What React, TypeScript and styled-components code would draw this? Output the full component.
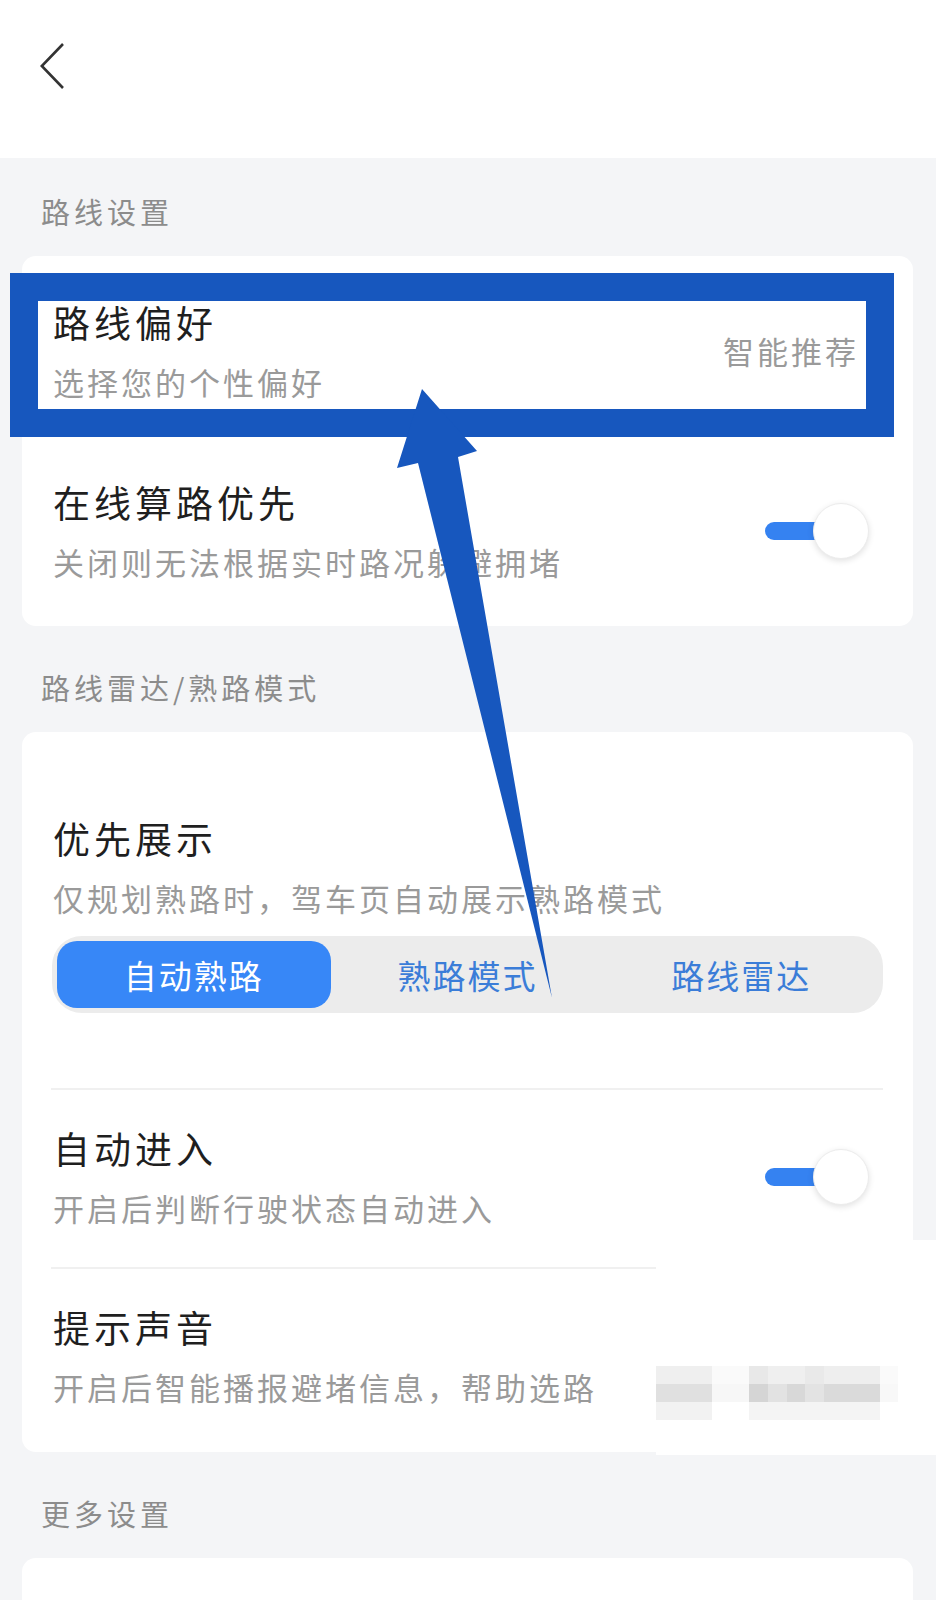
import React from "react";
import styled, { createGlobalStyle } from "styled-components";

const GlobalStyle = createGlobalStyle`
  body {
    margin: 0;
    background: #f4f5f7;
    font-family: "Noto Sans CJK SC", "Noto Sans", sans-serif;
  }
`;

const Page = styled.div`
  position: relative;
  width: 936px;
  height: 1600px;
  background: #f4f5f7;
  overflow: hidden;
`;

const Header = styled.header`
  height: 158px;
  box-sizing: border-box;
  padding: 43px 0 0 40px;
  background: #fff;
`;

const BackButton = styled.button`
  display: block;
  padding: 0;
  border: none;
  background: none;
  cursor: pointer;
`;

const SectionTitle = styled.div<{ $first?: boolean }>`
  padding: ${({ $first }) => ($first ? "35px" : "43px")} 0 27px 41px;
  font-size: 29px;
  line-height: 36px;
  letter-spacing: 4px;
  color: #8c8c8c;
`;

const Card = styled.div<{ $pad?: string; $tail?: boolean }>`
  margin: 0 23px 0 22px;
  padding: ${({ $pad }) => $pad ?? "0"};
  background: #fff;
  border-radius: 14px;
  min-height: ${({ $tail }) => ($tail ? "60px" : "0")};
`;

const Row = styled.div<{ $top: number; $bottom: number }>`
  display: flex;
  align-items: center;
  justify-content: space-between;
  padding: ${({ $top, $bottom }) => `${$top}px 44px ${$bottom}px 31px`};
`;

const Texts = styled.div`
  display: flex;
  flex-direction: column;
  gap: 19px;
`;

const Title = styled.div`
  font-size: 37px;
  line-height: 44px;
  letter-spacing: 4px;
  color: #1f1f1f;
`;

const Sub = styled.div`
  font-size: 31px;
  line-height: 38px;
  letter-spacing: 3px;
  color: #9a9a9a;
  white-space: nowrap;
`;

const Value = styled.div`
  margin-right: 10px;
  font-size: 31px;
  line-height: 38px;
  letter-spacing: 3px;
  color: #9a9a9a;
`;

const Toggle = styled.div`
  position: relative;
  width: 104px;
  height: 56px;
  flex-shrink: 0;
`;

const Track = styled.div`
  position: absolute;
  left: 0;
  top: 19px;
  width: 84px;
  height: 18px;
  border-radius: 9px;
  background: #3582f1;
`;

const Knob = styled.div`
  position: absolute;
  right: 0;
  top: 0;
  width: 56px;
  height: 56px;
  box-sizing: border-box;
  border-radius: 50%;
  background: #fff;
  border: 1px solid #ececec;
  box-shadow: 0 2px 6px rgba(0, 0, 0, 0.12);
`;

const Block = styled.div`
  padding: 84px 30px 75px 31px;
`;

const Segmented = styled.div`
  display: grid;
  grid-template-columns: repeat(3, 1fr);
  margin: 19px 0 0 -1px;
  padding: 5px;
  height: 77px;
  box-sizing: border-box;
  border-radius: 30px;
  background: #ececec;
`;

const Segment = styled.div<{ $active?: boolean }>`
  display: flex;
  align-items: center;
  justify-content: center;
  border-radius: 20px;
  font-size: 33px;
  letter-spacing: 2px;
  background: ${({ $active }) => ($active ? "#3787f7" : "transparent")};
  color: ${({ $active }) => ($active ? "#fff" : "#3b7dd8")};
`;

const Divider = styled.div`
  height: 2px;
  margin: 0 30px 0 29px;
  background: #f0f0f0;
`;

const Highlight = styled.div`
  position: absolute;
  left: 10px;
  top: 273px;
  width: 884px;
  height: 164px;
  box-sizing: border-box;
  border: 28px solid #1757be;
  pointer-events: none;
`;

const Overlay = styled.svg`
  position: absolute;
  left: 0;
  top: 0;
  pointer-events: none;
`;

const Mask = styled.div`
  position: absolute;
  left: 656px;
  top: 1240px;
  width: 280px;
  height: 215px;
  background: #fff;
`;

function Switch() {
  return (
    <Toggle>
      <Track />
      <Knob />
    </Toggle>
  );
}

const blocks: [number, number, number, number, string][] = [
  [0, 126, 56, 18, "#efefef"],
  [56, 126, 37, 18, "#fafafa"],
  [93, 126, 19, 18, "#e8e8e8"],
  [112, 126, 37, 18, "#efefef"],
  [149, 126, 19, 18, "#e9e9e9"],
  [168, 126, 56, 18, "#eeeeee"],
  [224, 126, 18, 18, "#fafafa"],
  [0, 144, 56, 18, "#e0e0e0"],
  [56, 144, 37, 18, "#f7f7f7"],
  [93, 144, 19, 18, "#d5d5d5"],
  [112, 144, 19, 18, "#e2e2e2"],
  [131, 144, 18, 18, "#d8d8d8"],
  [149, 144, 19, 18, "#e3e3e3"],
  [168, 144, 56, 18, "#dadada"],
  [224, 144, 18, 18, "#f8f8f8"],
  [0, 162, 56, 18, "#f2f2f2"],
  [93, 162, 131, 18, "#f4f4f4"],
];

export default function App() {
  return (
    <Page>
      <GlobalStyle />
      <Header>
        <BackButton aria-label="返回">
          <svg width="25" height="46" viewBox="0 0 25 46">
            <polyline
              points="23,1 1.8,23 23,45"
              fill="none"
              stroke="#333"
              strokeWidth="2.6"
            />
          </svg>
        </BackButton>
      </Header>

      <SectionTitle $first>路线设置</SectionTitle>
      <Card $pad="4px 0 6px">
        <Row $top={40} $bottom={39}>
          <Texts>
            <Title>路线偏好</Title>
            <Sub>选择您的个性偏好</Sub>
          </Texts>
          <Value>智能推荐</Value>
        </Row>
        <Row $top={40} $bottom={39}>
          <Texts>
            <Title>在线算路优先</Title>
            <Sub>关闭则无法根据实时路况躲避拥堵</Sub>
          </Texts>
          <Switch />
        </Row>
      </Card>

      <SectionTitle>路线雷达/熟路模式</SectionTitle>
      <Card>
        <Block>
          <Texts>
            <Title>优先展示</Title>
            <Sub>仅规划熟路时，驾车页自动展示熟路模式</Sub>
          </Texts>
          <Segmented>
            <Segment $active>自动熟路</Segment>
            <Segment>熟路模式</Segment>
            <Segment>路线雷达</Segment>
          </Segmented>
        </Block>
        <Divider />
        <Row $top={36} $bottom={40}>
          <Texts>
            <Title>自动进入</Title>
            <Sub>开启后判断行驶状态自动进入</Sub>
          </Texts>
          <Switch />
        </Row>
        <Divider />
        <Row $top={36} $bottom={46}>
          <Texts>
            <Title>提示声音</Title>
            <Sub>开启后智能播报避堵信息，帮助选路</Sub>
          </Texts>
        </Row>
      </Card>

      <SectionTitle>更多设置</SectionTitle>
      <Card $tail />

      <Mask>
        <svg width="280" height="215" viewBox="0 0 280 215">
          {blocks.map(([x, y, w, h, c], i) => (
            <rect key={i} x={x} y={y} width={w} height={h} fill={c} />
          ))}
        </svg>
      </Mask>

      <Highlight />
      <Overlay width="936" height="1600" viewBox="0 0 936 1600">
        <polygon
          points="422,389 477,451 458,457 552,998 418,463 397,468"
          fill="#1757be"
        />
      </Overlay>
    </Page>
  );
}
